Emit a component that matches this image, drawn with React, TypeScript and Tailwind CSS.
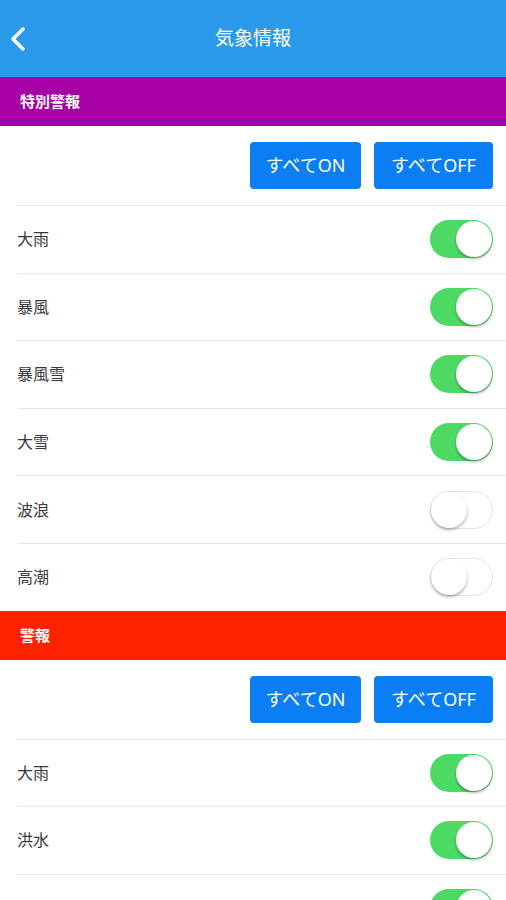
import { useState } from "react";

type Item = { name: string; on: boolean };

type Section = {
  title: string;
  color: string;
  items: Item[];
};

const initial: Section[] = [
  {
    title: "特別警報",
    color: "bg-[#a600a6]",
    items: [
      { name: "大雨", on: true },
      { name: "暴風", on: true },
      { name: "暴風雪", on: true },
      { name: "大雪", on: true },
      { name: "波浪", on: false },
      { name: "高潮", on: false },
    ],
  },
  {
    title: "警報",
    color: "bg-[#ff2200]",
    items: [
      { name: "大雨", on: true },
      { name: "洪水", on: true },
      { name: "暴風", on: true },
    ],
  },
];

function Toggle({ on, onClick }: { on: boolean; onClick: () => void }) {
  return (
    <button
      onClick={onClick}
      className={`relative h-[38px] w-[63px] rounded-full transition-colors ${
        on ? "bg-[#4cd964]" : "bg-white border border-[#e3e3e3]"
      }`}
    >
      <span
        className={`absolute top-1/2 -translate-y-1/2 h-[36px] w-[36px] rounded-full bg-white shadow-[0_2px_3px_rgba(0,0,0,0.3)] ${
          on ? "right-[1px]" : "left-0"
        }`}
      />
    </button>
  );
}

export default function App() {
  const [sections, setSections] = useState<Section[]>(initial);

  const setAll = (si: number, value: boolean) => {
    setSections((prev) =>
      prev.map((s, i) =>
        i === si ? { ...s, items: s.items.map((it) => ({ ...it, on: value })) } : s
      )
    );
  };

  const flip = (si: number, ii: number) => {
    setSections((prev) =>
      prev.map((s, i) =>
        i === si
          ? {
              ...s,
              items: s.items.map((it, j) => (j === ii ? { ...it, on: !it.on } : it)),
            }
          : s
      )
    );
  };

  return (
    <div
      className="w-[506px] h-[900px] overflow-hidden bg-white"
      style={{ fontFamily: '"Noto Sans", "Noto Sans CJK JP", sans-serif' }}
    >
      <div className="h-[77px] bg-[#2b9aeb] flex items-center relative">
        <svg
          className="absolute left-[10px] top-[26px]"
          width="16"
          height="26"
          viewBox="0 0 16 26"
          fill="none"
          stroke="white"
          strokeWidth="3.5"
          strokeLinecap="round"
          strokeLinejoin="round"
        >
          <path d="M13 3 L3 13 L13 23" />
        </svg>
        <h1 className="flex-1 text-center text-white text-[19px]">気象情報</h1>
      </div>

      {sections.map((s, si) => (
        <div key={s.title}>
          <div className={`h-[49px] ${s.color} flex items-center px-5`}>
            <span className="text-white font-bold text-[15px]">{s.title}</span>
          </div>
          <div className="h-[79px] flex items-center justify-end gap-[13px] pr-[13px]">
            <button
              onClick={() => setAll(si, true)}
              className="h-[47px] w-[111px] rounded bg-[#0a7ef2] text-white text-[18px]"
            >
              すべてON
            </button>
            <button
              onClick={() => setAll(si, false)}
              className="h-[47px] w-[119px] rounded bg-[#0a7ef2] text-white text-[18px]"
            >
              すべてOFF
            </button>
          </div>
          <div className="pl-[17px]">
            {s.items.map((it, ii) => (
              <div
                key={it.name}
                className="h-[67.6px] border-t border-[#e6e6e6] flex items-center justify-between pr-[13px]"
              >
                <span className="text-[16px] text-[#3a3a3a]">{it.name}</span>
                <Toggle on={it.on} onClick={() => flip(si, ii)} />
              </div>
            ))}
          </div>
        </div>
      ))}
    </div>
  );
}
